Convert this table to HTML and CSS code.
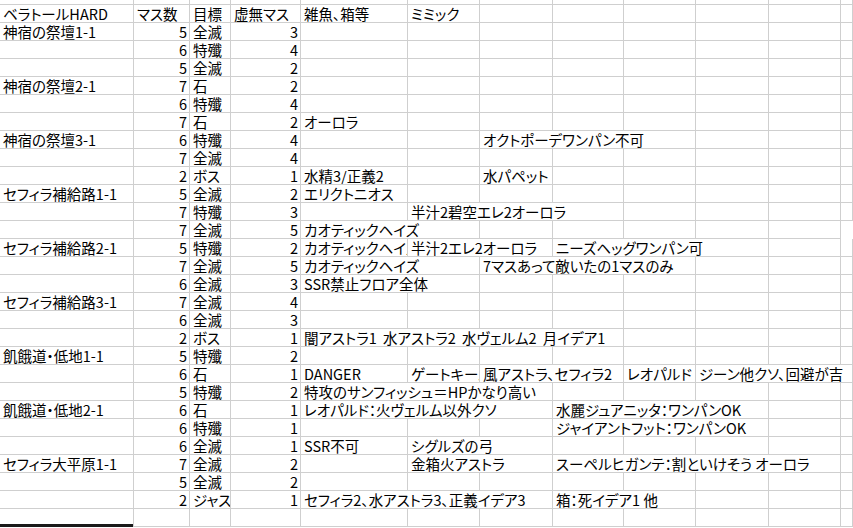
FILE: index.html
```html
<!DOCTYPE html>
<html lang="ja">
<head>
<meta charset="utf-8">
<title>ベラトールHARD</title>
<link rel="stylesheet" href="styles.css">
</head>
<body>
<div class="sheet">
  <div class="row top"><span></span><span></span><span></span><span></span><span></span><span></span><span></span><span></span><span></span><span></span><span></span><span></span></div>

  <div class="row"><span>ベラトールHARD</span><span>マス数</span><span>目標</span><span>虚無マス</span><span>雑魚、箱等</span><span>ミミック</span><span></span><span></span><span></span><span></span><span></span><span></span></div>

  <div class="row"><span>神宿の祭壇1-1</span><span class="n">5</span><span>全滅</span><span class="n">3</span><span></span><span></span><span></span><span></span><span></span><span></span><span></span><span></span></div>
  <div class="row"><span></span><span class="n">6</span><span>特殲</span><span class="n">4</span><span></span><span></span><span></span><span></span><span></span><span></span><span></span><span></span></div>
  <div class="row"><span></span><span class="n">5</span><span>全滅</span><span class="n">2</span><span></span><span></span><span></span><span></span><span></span><span></span><span></span><span></span></div>

  <div class="row"><span>神宿の祭壇2-1</span><span class="n">7</span><span>石</span><span class="n">2</span><span></span><span></span><span></span><span></span><span></span><span></span><span></span><span></span></div>
  <div class="row"><span></span><span class="n">6</span><span>特殲</span><span class="n">4</span><span></span><span></span><span></span><span></span><span></span><span></span><span></span><span></span></div>
  <div class="row"><span></span><span class="n">7</span><span>石</span><span class="n">2</span><span>オーロラ</span><span></span><span></span><span></span><span></span><span></span><span></span><span></span></div>

  <div class="row"><span>神宿の祭壇3-1</span><span class="n">6</span><span>特殲</span><span class="n">4</span><span></span><span></span><span class="s3">オクトポーデワンパン不可</span><span></span><span></span><span></span></div>
  <div class="row"><span></span><span class="n">7</span><span>全滅</span><span class="n">4</span><span></span><span></span><span></span><span></span><span></span><span></span><span></span><span></span></div>
  <div class="row"><span></span><span class="n">2</span><span>ボス</span><span class="n">1</span><span>水精3/正義2</span><span></span><span>水パペット</span><span></span><span></span><span></span><span></span><span></span></div>

  <div class="row"><span>セフィラ補給路1-1</span><span class="n">5</span><span>全滅</span><span class="n">2</span><span>エリクトニオス</span><span></span><span></span><span></span><span></span><span></span><span></span><span></span></div>
  <div class="row"><span></span><span class="n">7</span><span>特殲</span><span class="n">3</span><span></span><span class="s3">半汁2碧空エレ2オーロラ</span><span></span><span></span><span></span><span></span></div>
  <div class="row"><span></span><span class="n">7</span><span>全滅</span><span class="n">5</span><span class="s2">カオティックヘイズ</span><span></span><span></span><span></span><span></span><span></span></div>

  <div class="row"><span>セフィラ補給路2-1</span><span class="n">5</span><span>特殲</span><span class="n">2</span><span>カオティックヘイズ</span><span class="s2">半汁2エレ2オーロラ</span><span class="s3">ニーズヘッグワンパン可</span><span></span><span></span></div>
  <div class="row"><span></span><span class="n">7</span><span>全滅</span><span class="n">5</span><span class="s2">カオティックヘイズ</span><span class="s3">7マスあって敵いたの1マスのみ</span><span></span><span></span><span></span></div>
  <div class="row"><span></span><span class="n">6</span><span>全滅</span><span class="n">3</span><span class="s2">SSR禁止フロア全体</span><span></span><span></span><span></span><span></span><span></span><span></span></div>

  <div class="row"><span>セフィラ補給路3-1</span><span class="n">7</span><span>全滅</span><span class="n">4</span><span></span><span></span><span></span><span></span><span></span><span></span><span></span><span></span></div>
  <div class="row"><span></span><span class="n">6</span><span>全滅</span><span class="n">3</span><span></span><span></span><span></span><span></span><span></span><span></span><span></span><span></span></div>
  <div class="row"><span></span><span class="n">2</span><span>ボス</span><span class="n">1</span><span class="s4 wide">闇アストラ1 水アストラ2 水ヴェルム2 月イデア1</span><span></span><span></span><span></span><span></span></div>

  <div class="row"><span>飢餓道・低地1-1</span><span class="n">5</span><span>特殲</span><span class="n">2</span><span></span><span></span><span></span><span></span><span></span><span></span><span></span><span></span></div>
  <div class="row"><span></span><span class="n">6</span><span>石</span><span class="n">1</span><span>DANGER</span><span>ゲートキーパー</span><span class="s2">風アストラ、セフィラ2</span><span>レオパルド</span><span class="s3">ジーン他クソ、回避が吉</span></div>
  <div class="row"><span></span><span class="n">5</span><span>特殲</span><span class="n">2</span><span class="s3">特攻のサンフィッシュ＝HPかなり高い</span><span></span><span></span><span></span><span></span><span></span></div>

  <div class="row"><span>飢餓道・低地2-1</span><span class="n">6</span><span>石</span><span class="n">1</span><span class="s3">レオパルド：火ヴェルム以外クソ</span><span class="s3">水麗ジュアニッタ：ワンパンOK</span><span></span><span></span></div>
  <div class="row"><span></span><span class="n">6</span><span>特殲</span><span class="n">1</span><span></span><span></span><span></span><span class="s3">ジャイアントフット：ワンパンOK</span><span></span><span></span></div>
  <div class="row"><span></span><span class="n">6</span><span>全滅</span><span class="n">1</span><span>SSR不可</span><span class="s2">シグルズの弓</span><span></span><span></span><span></span><span></span><span></span></div>

  <div class="row"><span>セフィラ大平原1-1</span><span class="n">7</span><span>全滅</span><span class="n">2</span><span></span><span class="s2">金箱火アストラ</span><span class="s4">スーペルヒガンテ：割といけそう オーロラ</span><span></span></div>
  <div class="row"><span></span><span class="n">5</span><span>全滅</span><span class="n">2</span><span></span><span></span><span></span><span></span><span></span><span></span><span></span><span></span></div>
  <div class="row"><span></span><span class="n">2</span><span>ジャス</span><span class="n">1</span><span class="s3">セフィラ2、水アストラ3、正義イデア3</span><span class="s2">箱：死イデア1 他</span><span></span><span></span><span></span></div>

  <div class="row last"><span></span><span></span><span></span><span></span><span></span><span></span><span></span><span></span><span></span><span></span><span></span><span></span></div>
  <div class="tabbar"></div>
</div>
</body>
</html>
```
FILE: styles.css
```css
html, body {
  margin: 0;
  padding: 0;
  background: #ffffff;
  overflow: hidden;
}

body {
  font-family: "Noto Sans CJK JP", "Liberation Sans", sans-serif;
  font-size: 14.5px;
  font-feature-settings: "palt";
  color: #000000;
}

.sheet {
  width: 853px;
}

.row {
  display: grid;
  grid-template-columns: 134px 56px 41px 70px 107px 72px 73px 71px 72px 73px 72px 1fr;
  height: 18px;
}

.row.top {
  height: 5px;
}

.row > span {
  box-sizing: border-box;
  border-right: 1px solid #cfcfcf;
  border-bottom: 1px solid #cfcfcf;
  padding: 0 2px 0 3px;
  white-space: nowrap;
  overflow: hidden;
  line-height: 17px;
  height: 100%;
}

.row > span.n {
  text-align: right;
  padding-right: 2px;
}

.row > span.wide {
  word-spacing: 3px;
}

.row > span.s2 { grid-column: span 2; }
.row > span.s3 { grid-column: span 3; }
.row > span.s4 { grid-column: span 4; }

.row.last > span:first-child {
  border-bottom: none;
}

.tabbar {
  width: 134px;
  height: 3px;
  margin-top: -3px;
  background: #1a1a1a;
}
```
